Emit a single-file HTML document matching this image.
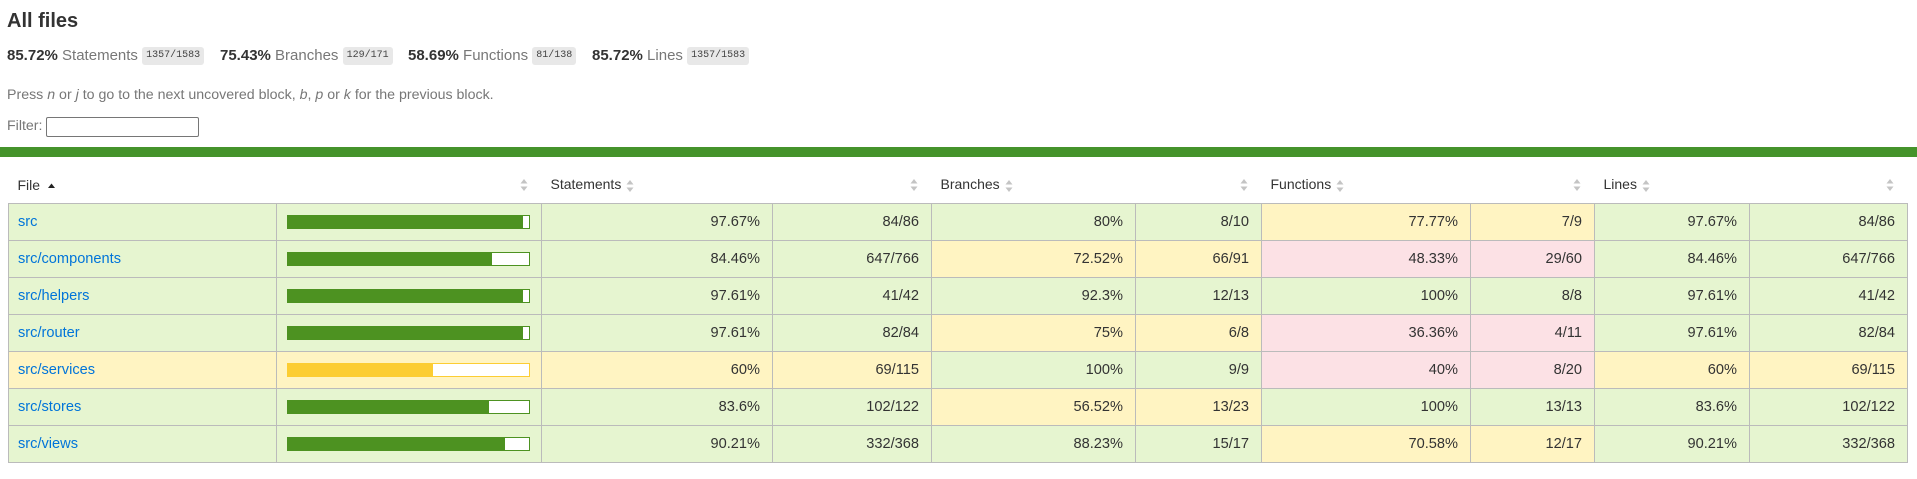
<!DOCTYPE html>
<html><head><meta charset="utf-8"><style>
html,body{margin:0;padding:0;background:#fff;width:1917px;height:479px;overflow:hidden}
body{font-family:"Liberation Sans",Helvetica,Arial,sans-serif;color:#333;font-size:15px}
h1{position:absolute;left:7px;top:10px;margin:0;font-size:20px;font-weight:bold;color:#333}
.stats{position:absolute;top:47px;left:7px;white-space:nowrap;height:18px;line-height:18px}
.stats span.g{position:absolute;top:0;white-space:nowrap}
.stats b{color:#333}
.lbl{color:#777}
.badge{display:inline-block;background:#e8e8e8;border-radius:3px;font-family:"Liberation Mono",monospace;font-size:10px;color:#444;padding:0 4px;height:18px;line-height:18px;vertical-align:top}
.press{position:absolute;left:7px;top:87px;color:#777;font-size:14.2px}
.filter{position:absolute;left:7px;top:118px;color:#777;font-size:14.2px}
.filter .inp{position:absolute;left:39px;top:-1px;width:151px;height:18px;border:1px solid #767676;border-radius:2px;background:#fff}
.bar{position:absolute;left:0;top:147px;width:1917px;height:10px;background:#45932b}
table{position:absolute;left:8px;top:166px;border-collapse:collapse;table-layout:fixed;width:1900px}
th{height:37px;padding:0;font-weight:normal;text-align:left;font-size:14px;color:#333;position:relative;vertical-align:middle}
td{height:36px;border:1px solid #bbb;padding:0 12px 0 9px;font-size:14.6px;text-align:right;color:#333}
td.f{text-align:left}
td.f a{color:#0074d9;text-decoration:none}
.hi{background:#e6f5d0}.me{background:#fff4c2}.lo{background:#fce1e5}
.s{display:inline-block;width:8px;height:14px;vertical-align:middle;margin-left:5px}
.sr{position:absolute;right:14px;top:12px}
.cw{position:absolute;left:10px;top:11px;width:241px;height:12px;background:#fff;border:1px solid #4d9221}
.cw .fill{height:12px;background:#4d9221}
.cw.m{border-color:#fccd33}.cw.m .fill{background:#fccd33}
td.c{padding:0;position:relative}
</style></head><body>
<h1>All files</h1>
<div class="stats">
<span class="g" style="left:0"><b>85.72%</b> <span class="lbl">Statements</span> <span class="badge">1357/1583</span></span>
<span class="g" style="left:213px"><b>75.43%</b> <span class="lbl">Branches</span> <span class="badge">129/171</span></span>
<span class="g" style="left:401px"><b>58.69%</b> <span class="lbl">Functions</span> <span class="badge">81/138</span></span>
<span class="g" style="left:585px"><b>85.72%</b> <span class="lbl">Lines</span> <span class="badge">1357/1583</span></span>
</div>
<div class="press">Press <i>n</i> or <i>j</i> to go to the next uncovered block, <i>b</i>, <i>p</i> or <i>k</i> for the previous block.</div>
<div class="filter">Filter: <span class="inp"></span></div>
<div class="bar"></div>
<svg width="0" height="0" style="position:absolute"><defs><symbol id="srt" viewBox="0 0 8 14"><path d="M4 1L7.5 5.5H0.5Z M4 13L7.5 8.5H0.5Z" fill="#c4c4c4"/></symbol></defs></svg>
<table>
<colgroup><col style="width:268px"><col style="width:265px"><col style="width:231px"><col style="width:159px"><col style="width:204px"><col style="width:126px"><col style="width:209px"><col style="width:124px"><col style="width:155px"><col style="width:158px"></colgroup>
<tr>
<th style="padding-left:9px">File <svg width="9" height="8" style="vertical-align:middle;margin-left:3px"><path d="M4.5 1.5L8 6H1Z" fill="#222"/></svg></th>
<th><svg class="s sr" style="margin:0"><use href="#srt"/></svg></th>
<th style="padding-left:9px">Statements<svg class="s"><use href="#srt"/></svg></th>
<th><svg class="s sr" style="margin:0"><use href="#srt"/></svg></th>
<th style="padding-left:9px">Branches<svg class="s"><use href="#srt"/></svg></th>
<th><svg class="s sr" style="margin:0"><use href="#srt"/></svg></th>
<th style="padding-left:9px">Functions<svg class="s"><use href="#srt"/></svg></th>
<th><svg class="s sr" style="margin:0"><use href="#srt"/></svg></th>
<th style="padding-left:9px">Lines<svg class="s"><use href="#srt"/></svg></th>
<th><svg class="s sr" style="margin:0"><use href="#srt"/></svg></th>
</tr>
<tr><td class="f hi"><a>src</a></td><td class="c hi"><div class="cw"><div class="fill" style="width:97.67%"></div></div></td><td class="hi">97.67%</td><td class="hi">84/86</td><td class="hi">80%</td><td class="hi">8/10</td><td class="me">77.77%</td><td class="me">7/9</td><td class="hi">97.67%</td><td class="hi">84/86</td></tr>
<tr><td class="f hi"><a>src/components</a></td><td class="c hi"><div class="cw"><div class="fill" style="width:84.46%"></div></div></td><td class="hi">84.46%</td><td class="hi">647/766</td><td class="me">72.52%</td><td class="me">66/91</td><td class="lo">48.33%</td><td class="lo">29/60</td><td class="hi">84.46%</td><td class="hi">647/766</td></tr>
<tr><td class="f hi"><a>src/helpers</a></td><td class="c hi"><div class="cw"><div class="fill" style="width:97.61%"></div></div></td><td class="hi">97.61%</td><td class="hi">41/42</td><td class="hi">92.3%</td><td class="hi">12/13</td><td class="hi">100%</td><td class="hi">8/8</td><td class="hi">97.61%</td><td class="hi">41/42</td></tr>
<tr><td class="f hi"><a>src/router</a></td><td class="c hi"><div class="cw"><div class="fill" style="width:97.61%"></div></div></td><td class="hi">97.61%</td><td class="hi">82/84</td><td class="me">75%</td><td class="me">6/8</td><td class="lo">36.36%</td><td class="lo">4/11</td><td class="hi">97.61%</td><td class="hi">82/84</td></tr>
<tr><td class="f me"><a>src/services</a></td><td class="c me"><div class="cw m"><div class="fill" style="width:60%"></div></div></td><td class="me">60%</td><td class="me">69/115</td><td class="hi">100%</td><td class="hi">9/9</td><td class="lo">40%</td><td class="lo">8/20</td><td class="me">60%</td><td class="me">69/115</td></tr>
<tr><td class="f hi"><a>src/stores</a></td><td class="c hi"><div class="cw"><div class="fill" style="width:83.6%"></div></div></td><td class="hi">83.6%</td><td class="hi">102/122</td><td class="me">56.52%</td><td class="me">13/23</td><td class="hi">100%</td><td class="hi">13/13</td><td class="hi">83.6%</td><td class="hi">102/122</td></tr>
<tr><td class="f hi"><a>src/views</a></td><td class="c hi"><div class="cw"><div class="fill" style="width:90.21%"></div></div></td><td class="hi">90.21%</td><td class="hi">332/368</td><td class="hi">88.23%</td><td class="hi">15/17</td><td class="me">70.58%</td><td class="me">12/17</td><td class="hi">90.21%</td><td class="hi">332/368</td></tr>
</table>
</body></html>
